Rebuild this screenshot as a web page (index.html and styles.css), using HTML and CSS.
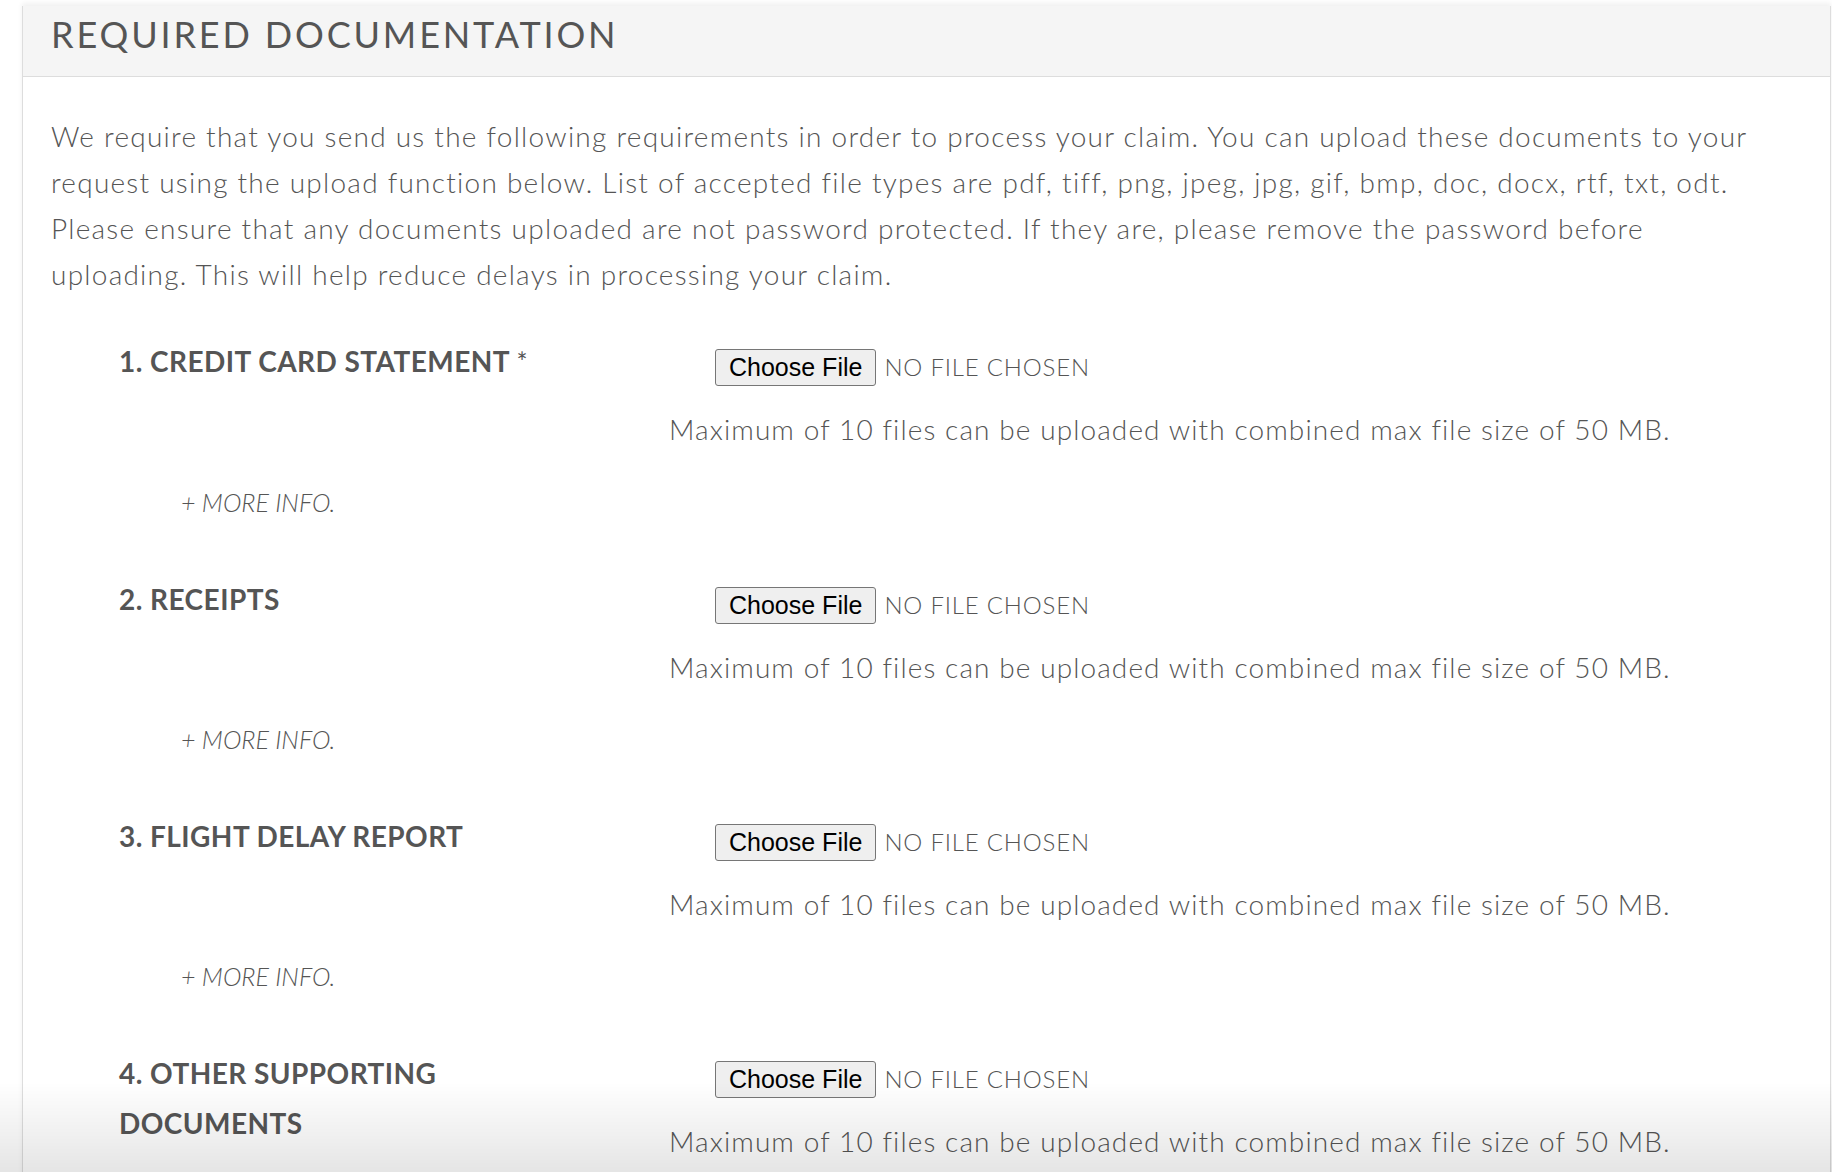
FILE: index.html
```html
<!DOCTYPE html>
<html lang="en">
<head>
<meta charset="UTF-8">
<meta name="viewport" content="width=device-width, initial-scale=1.0">
<title>Required Documentation</title>
<link rel="stylesheet" href="styles.css">
</head>
<body>
<div class="panel">
  <div class="panel-heading">
    <h2>Required Documentation</h2>
  </div>
  <div class="panel-body">
    <p class="intro">We require that you send us the following requirements in order to process your claim. You can upload these documents to your request using the upload function below. List of accepted file types are pdf, tiff, png, jpeg, jpg, gif, bmp, doc, docx, rtf, txt, odt. Please ensure that any documents uploaded are not password protected. If they are, please remove the password before uploading. This will help reduce delays in processing your claim.</p>

    <div class="doc-row">
      <div class="doc-label">
        <h3>1. Credit Card Statement <span class="req">*</span></h3>
        <a class="more-info" href="#">+ More info.</a>
      </div>
      <div class="doc-upload">
        <input type="file">
        <p class="hint">Maximum of 10 files can be uploaded with combined max file size of 50 MB.</p>
      </div>
    </div>

    <div class="doc-row">
      <div class="doc-label">
        <h3>2. Receipts</h3>
        <a class="more-info" href="#">+ More info.</a>
      </div>
      <div class="doc-upload">
        <input type="file">
        <p class="hint">Maximum of 10 files can be uploaded with combined max file size of 50 MB.</p>
      </div>
    </div>

    <div class="doc-row">
      <div class="doc-label">
        <h3>3. Flight Delay Report</h3>
        <a class="more-info" href="#">+ More info.</a>
      </div>
      <div class="doc-upload">
        <input type="file">
        <p class="hint">Maximum of 10 files can be uploaded with combined max file size of 50 MB.</p>
      </div>
    </div>

    <div class="doc-row">
      <div class="doc-label">
        <h3>4. Other Supporting Documents</h3>
        <a class="more-info" href="#">+ More info.</a>
      </div>
      <div class="doc-upload">
        <input type="file">
        <p class="hint">Maximum of 10 files can be uploaded with combined max file size of 50 MB.</p>
      </div>
    </div>
  </div>
</div>
<div class="footer-shade"></div>
</body>
</html>
```

FILE: styles.css
```css
body {
  margin: 0;
  font-family: Lato, "Liberation Sans", sans-serif;
  color: #555;
  background: #fff;
}
.panel {
  margin: 6px 1px 0 22px;
  border-left: 1px solid #ddd;
  border-right: 1px solid #ddd;
  box-shadow: 0 -3px 5px rgba(0, 0, 0, 0.06);
}
.panel-heading {
  height: 71px;
  padding: 6px 28px 0;
  box-sizing: border-box;
  background: #f5f5f5;
  border-bottom: 1px solid #ddd;
}
.panel-heading h2 {
  margin: 0;
  font-size: 36px;
  line-height: 44px;
  font-weight: 400;
  letter-spacing: 2.85px;
  text-transform: uppercase;
  color: #555;
}
.panel-body {
  padding: 36px 28px 0;
}
.intro {
  margin: 0 0 39px;
  max-width: 1715px;
  font-size: 28px;
  line-height: 46px;
  font-weight: 300;
  letter-spacing: 1.25px;
}
.doc-row {
  display: grid;
  grid-template-columns: 550px 1fr;
  padding: 0 0 54px 68px;
}
.doc-label h3 {
  margin: 0;
  max-width: 460px;
  font-size: 28px;
  line-height: 50px;
  font-weight: 700;
  letter-spacing: 0.45px;
  text-transform: uppercase;
}
.req {
  font-size: 26px;
  font-weight: 400;
}
.more-info {
  display: block;
  margin-top: 97px;
  padding-left: 62px;
  font-size: 25px;
  line-height: 36px;
  font-weight: 300;
  font-style: italic;
  text-transform: uppercase;
  color: #555;
  text-decoration: none;
}
.doc-upload {
  padding-top: 13px;
}
.doc-upload input[type="file"] {
  display: block;
  margin-left: 46px;
  font-family: Lato, "Liberation Sans", sans-serif;
  font-size: 24px;
  font-weight: 300;
  letter-spacing: 0.8px;
  text-transform: uppercase;
  color: #555;
}
.doc-upload input[type="file"]::file-selector-button {
  height: 37px;
  margin-right: 8px;
  padding: 1px 13px;
  font-family: "Liberation Sans", Arial, sans-serif;
  font-size: 25px;
  font-weight: 400;
  letter-spacing: 0;
  text-transform: none;
  color: #000;
  background: #efefef;
  border: 1px solid #767676;
  border-radius: 3px;
}
.hint {
  margin: 20px 0 0;
  font-size: 28px;
  line-height: 46px;
  font-weight: 300;
  letter-spacing: 1.1px;
}
.footer-shade {
  position: fixed;
  left: 0;
  right: 0;
  bottom: 0;
  height: 90px;
  background: linear-gradient(to bottom, rgba(0, 0, 0, 0), rgba(0, 0, 0, 0.1));
  pointer-events: none;
}
```
